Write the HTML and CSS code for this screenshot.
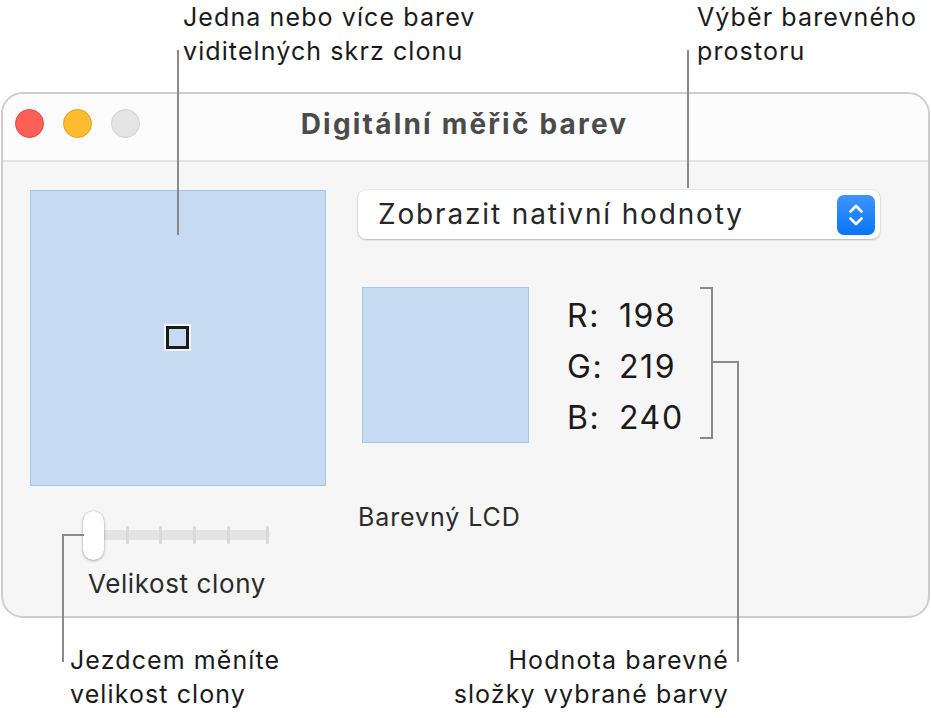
FILE: index.html
```html
<!DOCTYPE html>
<html lang="cs">
<head>
<meta charset="utf-8">
<title>Digitální měřič barev</title>
<link rel="stylesheet" href="styles.css">
</head>
<body>
<div class="page">
  <div class="window">
    <div class="titlebar">
      <div class="lights">
        <span class="light red"></span>
        <span class="light yellow"></span>
        <span class="light gray"></span>
      </div>
      <div class="title">Digitální měřič barev</div>
    </div>
    <div class="content">
      <div class="left-col">
        <div class="aperture">
          <span class="aperture-box"></span>
        </div>
        <div class="slider-block">
          <div class="slider">
            <div class="track">
              <span class="tick t1"></span>
              <span class="tick t2"></span>
              <span class="tick t3"></span>
              <span class="tick t4"></span>
              <span class="tick t5"></span>
            </div>
            <span class="knob"></span>
          </div>
          <div class="slider-label">Velikost clony</div>
        </div>
      </div>
      <div class="right-col">
        <div class="popup">
          <span class="popup-text">Zobrazit nativní hodnoty</span>
          <span class="stepper">
            <svg width="38" height="40" viewBox="0 0 38 40">
              <path d="M13.5 16.5 L19 11 L24.5 16.5" fill="none" stroke="#fff" stroke-width="2.6" stroke-linecap="round" stroke-linejoin="round"/>
              <path d="M13.5 23.5 L19 29 L24.5 23.5" fill="none" stroke="#fff" stroke-width="2.6" stroke-linecap="round" stroke-linejoin="round"/>
            </svg>
          </span>
        </div>
        <div class="sample-row">
          <div class="sample"></div>
          <div class="values">
            <div class="val"><span class="ch">R:</span><span class="num">198</span></div>
            <div class="val"><span class="ch">G:</span><span class="num">219</span></div>
            <div class="val"><span class="ch">B:</span><span class="num">240</span></div>
          </div>
        </div>
        <div class="profile">Barevný LCD</div>
      </div>
    </div>
  </div>

  <div class="note note-top-left">Jedna nebo více barev<br>viditelných skrz clonu</div>
  <div class="note note-top-right">Výběr barevného<br>prostoru</div>
  <div class="note note-bottom-left">Jezdcem měníte<br>velikost clony</div>
  <div class="note note-bottom-right">Hodnota barevné<br>složky vybrané barvy</div>

  <span class="ln ln-v1"></span>
  <span class="ln ln-v2"></span>
  <span class="ln ln-slider-h"></span>
  <span class="ln ln-slider-v"></span>
  <span class="bracket"></span>
  <span class="ln ln-br-h"></span>
  <span class="ln ln-br-v"></span>
</div>
</body>
</html>
```
FILE: styles.css
```css
html, body {
  margin: 0;
  padding: 0;
  background: #ffffff;
}
body {
  font-family: Inter, "Noto Sans", "Liberation Sans", sans-serif;
  color: #1c1c1c;
}
.page {
  position: relative;
  width: 931px;
  height: 718px;
  overflow: hidden;
  padding-top: 92px;
  box-sizing: border-box;
}
.window {
  margin-left: 1px;
  width: 929px;
  height: 526px;
  box-sizing: border-box;
  border: 2px solid #cdcdcd;
  border-radius: 22px;
  overflow: hidden;
  background: #f6f6f6;
  display: flex;
  flex-direction: column;
}
.titlebar {
  height: 66px;
  flex: none;
  background: #fcfcfc;
  border-bottom: 2px solid #e2e2e2;
  position: relative;
  display: flex;
  align-items: center;
  justify-content: center;
}
.lights {
  position: absolute;
  left: 12px;
  top: 15px;
  display: flex;
  gap: 19px;
}
.light {
  width: 29px;
  height: 29px;
  border-radius: 50%;
  box-sizing: border-box;
}
.red { background: #fe5f57; border: 1px solid #e2453f; }
.yellow { background: #febc2e; border: 1px solid #dfa023; }
.gray { background: #e4e4e4; border: 1px solid #cfcfcf; }
.title {
  font-size: 28px;
  font-weight: 700;
  color: #4b4b4b;
  letter-spacing: 2.2px;
  margin-left: -2px;
  margin-top: -6px;
}
.content {
  flex: 1;
  display: flex;
  padding: 28px 0 0 27px;
  gap: 32px;
}
.left-col {
  display: flex;
  flex-direction: column;
  width: 296px;
}
.aperture {
  width: 296px;
  height: 296px;
  box-sizing: border-box;
  background: #c6dbf1;
  border: 1px solid #a8c5e2;
  display: flex;
  align-items: center;
  justify-content: center;
}
.aperture-box {
  width: 23px;
  height: 23px;
  box-sizing: border-box;
  border: 3px solid #1b1b1b;
  outline: 2px solid #f2f6fb;
  margin: 0 1px 1px 0;
}
.slider-block {
  margin-top: 25px;
  margin-left: 53px;
}
.slider {
  position: relative;
  width: 190px;
  height: 50px;
}
.track {
  position: absolute;
  left: 12px;
  top: 19px;
  width: 175px;
  height: 10px;
  border-radius: 5px;
  background: #e4e4e4;
}
.tick {
  position: absolute;
  top: -4px;
  width: 3px;
  height: 18px;
  border-radius: 1.5px;
  background: #d9d9d9;
}
.t1 { left: 31px; }
.t2 { left: 64px; }
.t3 { left: 98px; }
.t4 { left: 132px; }
.t5 { left: 171px; }
.knob {
  position: absolute;
  left: 0;
  top: 0;
  width: 21px;
  height: 49px;
  border-radius: 11px;
  background: #ffffff;
  box-shadow: 0 0 0 0.5px rgba(0,0,0,0.12), 0 1px 3px rgba(0,0,0,0.28);
}
.slider-label {
  margin-top: 7px;
  margin-left: 5px;
  font-size: 26px;
  color: #2b2b2b;
  letter-spacing: 0.6px;
}
.right-col {
  display: flex;
  flex-direction: column;
  width: 522px;
}
.popup {
  height: 49px;
  box-sizing: border-box;
  background: #ffffff;
  border-radius: 8px;
  box-shadow: 0 0 0 0.5px rgba(0,0,0,0.10), 0 1px 2px rgba(0,0,0,0.22);
  display: flex;
  align-items: center;
  justify-content: space-between;
  padding: 0 5px 0 20px;
}
.popup-text {
  font-size: 28px;
  color: #262626;
  letter-spacing: 1.85px;
  margin-top: -2px;
}
.stepper {
  width: 38px;
  height: 40px;
  border-radius: 7px;
  background: linear-gradient(#3e95ff, #0a74f5);
  display: flex;
}
.sample-row {
  display: flex;
  margin-top: 48px;
  margin-left: 4px;
}
.sample {
  width: 167px;
  height: 156px;
  box-sizing: border-box;
  background: #c6dbf1;
  border: 1px solid #a8c5e2;
}
.values {
  margin-left: 38px;
  margin-top: 3px;
  display: flex;
  flex-direction: column;
}
.val {
  height: 51px;
  display: flex;
  align-items: center;
  font-size: 32px;
  color: #1a1a1a;
  letter-spacing: 1.6px;
}
.ch {
  width: 52px;
}
.profile {
  margin-top: 59px;
  font-size: 25px;
  color: #2b2b2b;
  letter-spacing: 0.9px;
}
.note {
  position: absolute;
  font-size: 25px;
  line-height: 34px;
  color: #1a1a1a;
  white-space: nowrap;
  letter-spacing: 1.1px;
}
.note-top-left { left: 183px; top: 0px; }
.note-top-right { left: 697px; top: 0px; }
.note-bottom-left { left: 70px; top: 643px; }
.note-bottom-right { right: 202px; top: 643px; text-align: right; }
.ln {
  position: absolute;
  background: #8a8a8a;
}
.ln-v1 { left: 177px; top: 50px; width: 2px; height: 185px; }
.ln-v2 { left: 687px; top: 50px; width: 2px; height: 138px; }
.ln-slider-h { left: 62px; top: 534px; width: 22px; height: 2px; }
.ln-slider-v { left: 62px; top: 534px; width: 2px; height: 128px; }
.bracket {
  position: absolute;
  left: 700px;
  top: 287px;
  width: 11px;
  height: 148px;
  border: 2px solid #8a8a8a;
  border-left: none;
}
.ln-br-h { left: 712px; top: 361px; width: 27px; height: 2px; }
.ln-br-v { left: 737px; top: 361px; width: 2px; height: 301px; }
```
